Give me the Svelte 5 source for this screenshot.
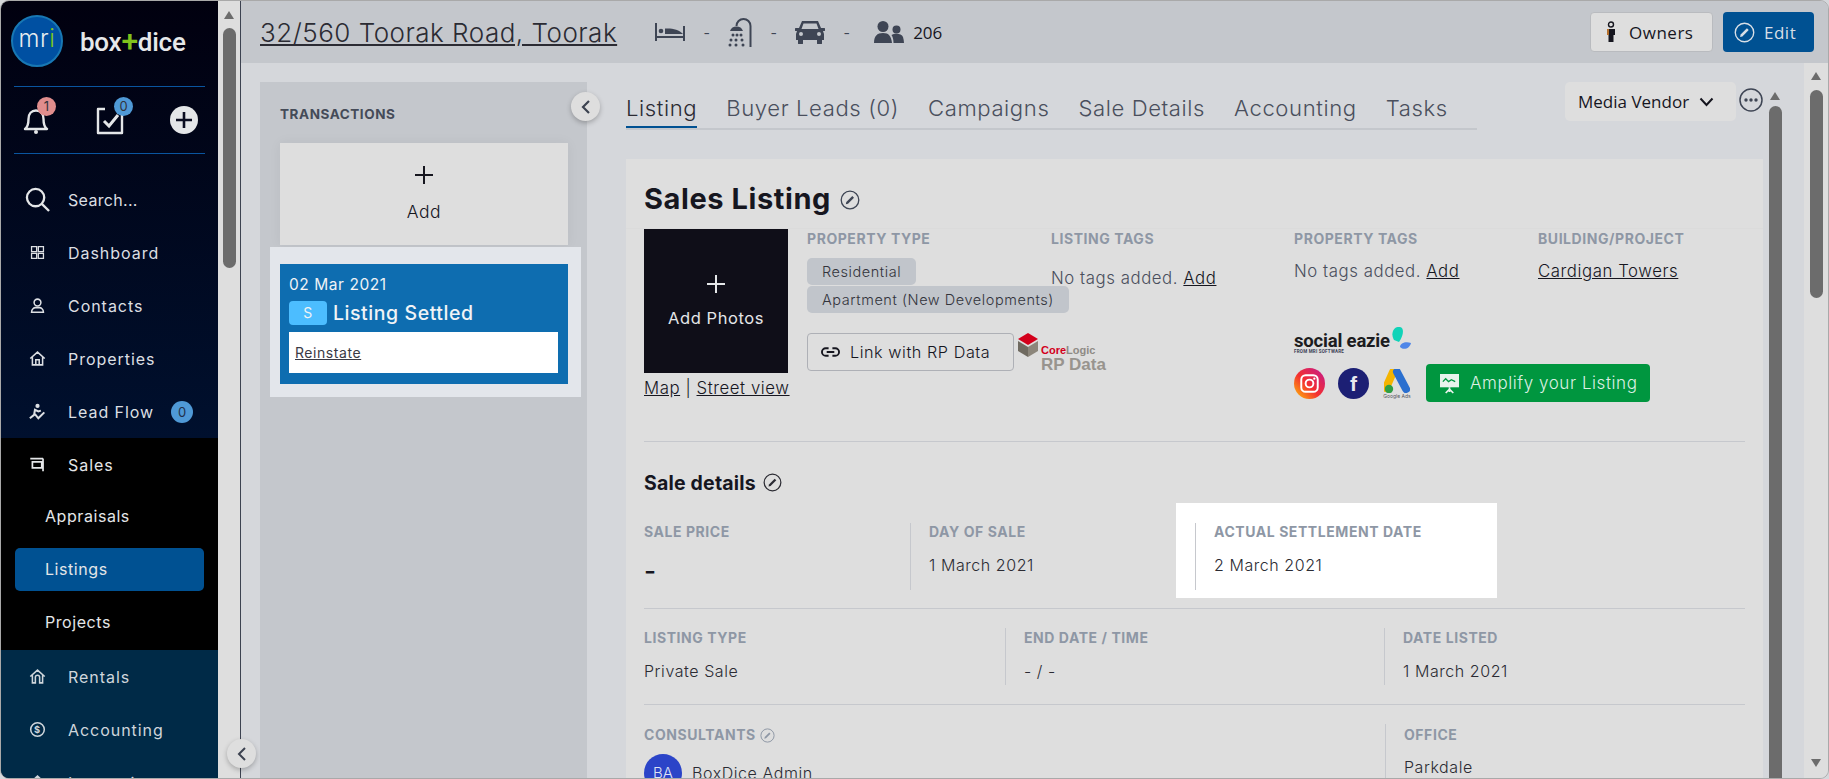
<script>
  // sidebar menu data, icons are drawn below by name
  const topItems = [
    { label: 'Dashboard', icon: 'grid' },
    { label: 'Contacts', icon: 'person' },
    { label: 'Properties', icon: 'house' },
    { label: 'Lead Flow', icon: 'runner', badge: 0 }
  ];
  const subItems = ['Appraisals', 'Listings', 'Projects'];
  const lowerItems = [
    { label: 'Rentals', icon: 'rentals' },
    { label: 'Accounting', icon: 'dollar' },
    { label: 'Inspections', icon: 'house' }
  ];
  const tabs = ['Listing', 'Buyer Leads (0)', 'Campaigns', 'Sale Details', 'Accounting', 'Tasks'];
</script>

{#snippet menuIcon(name)}
  <svg class="menu-icon" viewBox="0 0 20 20" fill="none" stroke="currentColor" stroke-width="1.8">
    {#if name === 'grid'}
      <path d="M3 3h6v6H3zM11 3h6v6h-6zM3 11h6v6H3zM11 11h6v6h-6z" stroke-width="1.5" />
    {:else if name === 'person'}
      <circle cx="10" cy="6.500" r="4" />
      <path d="M3 18c0-4 3-5.500 4.500-5.500h5c1.500 0 4.500 1.500 4.500 5.500z" />
    {:else if name === 'house'}
      <path d="M1.500 10 10 2.500 18.500 10M4 8.500V17.500h12V8.500M8 17.500V11.500h4v6" />
    {:else if name === 'runner'}
      <circle cx="10" cy="3.500" r="2.500" fill="currentColor" stroke="none" />
      <path d="M1 18l5-4 1-6 4 2 3-1M7 13l4 5 7-7" stroke-width="2.400" />
    {:else if name === 'sales'}
      <path d="M1.500 3h15M4 7h11v7H4zM16.500 3v15" stroke-width="2" />
    {:else if name === 'rentals'}
      <path d="M1.500 10 10 2.500 18.500 10M4 8.500V17.500h3.500V11a2.500 2.500 0 0 1 5 0v6.500H16V8.500" />
    {:else if name === 'dollar'}
      <circle cx="10" cy="10" r="8" />
      <text x="10" y="14" text-anchor="middle" font-size="11" font-weight="700" fill="currentColor" stroke="none" font-family="Inter, sans-serif">$</text>
    {/if}
  </svg>
{/snippet}

{#snippet editIcon(cls)}
  <svg class={cls} viewBox="0 0 20 20" fill="none" stroke="currentColor" stroke-width="1.300">
    <circle cx="10" cy="10" r="8.800" />
    <path d="M5.800 14.200 6.300 12l6-6 1.700 1.700-6 6z" fill="currentColor" stroke="none" />
  </svg>
{/snippet}

<div class="window">
  <aside class="sidebar">
    <div class="brand">
      <div class="mri">m<span class="mri-r">r</span><span class="mri-i">i</span></div>
      <div class="boxdice">box<span class="plus">+</span>dice</div>
    </div>

    <div class="quick">
      <div class="quick-item">
        <svg class="quick-icon" viewBox="0 0 28 30" fill="none" stroke="#e4e6e8" stroke-width="2.400">
          <path d="M2 24c2.500-2 3.500-4 3.500-10 0-5 3-8.500 7.500-8.500s7.500 3.500 7.500 8.500c0 6 1 8 3.500 10z" stroke-linejoin="round" />
          <circle cx="13" cy="27" r="2" fill="#e4e6e8" stroke="none" />
        </svg>
        <span class="quick-badge red">1</span>
      </div>
      <div class="quick-item">
        <svg class="quick-icon" viewBox="0 0 28 30" fill="none" stroke="#e4e6e8" stroke-width="2.400">
          <path d="M9 4H2v24h24V4h-3" stroke-linejoin="round" />
          <path d="M8 16l5 5 9-11" stroke-width="3" />
        </svg>
        <span class="quick-badge blue">0</span>
      </div>
      <svg class="quick-plus" viewBox="0 0 28 28">
        <circle cx="14" cy="14" r="14" fill="#e4e6e8" />
        <path d="M14 6v16M6 14h16" stroke="#0a0c20" stroke-width="2.600" />
      </svg>
    </div>

    <div class="menu">
      <div class="search-row">
        <svg class="search-icon" viewBox="0 0 26 26" fill="none" stroke="#e4e6e8" stroke-width="2.400">
          <circle cx="11" cy="11" r="9" />
          <path d="M17.500 17.500 25 25" />
        </svg>
        <span>Search...</span>
      </div>
      {#each topItems as item}
        <div class="menu-row">
          {@render menuIcon(item.icon)}
          <span>{item.label}</span>
          {#if item.badge !== undefined}<span class="menu-badge">{item.badge}</span>{/if}
        </div>
      {/each}
    </div>

    <div class="sales-group">
      <div class="menu-row">
        {@render menuIcon('sales')}
        <span>Sales</span>
      </div>
      {#each subItems as sub}
        <div class="sub-row" class:active={sub === 'Listings'}>{sub}</div>
      {/each}
    </div>

    <div class="lower">
      {#each lowerItems as item}
        <div class="menu-row">
          {@render menuIcon(item.icon)}
          <span>{item.label}</span>
        </div>
      {/each}
    </div>
  </aside>

  <div class="side-track">
    <span class="arrow-up"></span>
    <span class="side-thumb"></span>
  </div>

  <button class="collapse side-collapse" aria-label="Collapse sidebar">
    <svg viewBox="0 0 12 16" fill="none" stroke="#3c4250" stroke-width="2"><path d="M9 2 3 8l6 6" /></svg>
  </button>

  <div class="main">
    <header class="topbar">
      <a class="address">32/560 Toorak Road, Toorak</a>
      <div class="specs">
        <svg class="bed" viewBox="0 0 30 18" fill="#3e4554">
          <path d="M0 0h2v18H0zM28 3h2v15h-2zM2 13h26v2H2z" />
          <circle cx="6" cy="8" r="2.300" />
          <path d="M10 11V5.500c6-.5 14 .5 18 5.500z" />
        </svg>
        <span class="dash">-</span>
        <svg class="shower" viewBox="0 0 24 30" fill="none">
          <path d="M22.500 30V9a7 7 0 0 0-14 0" stroke="#3e4554" stroke-width="2" />
          <path d="M2 14a7 7 0 0 1 13 0z" fill="#3e4554" />
          <g fill="#3e4554"><circle cx="5" cy="18" r="1.500" /><circle cx="9" cy="18" r="1.500" /><circle cx="13" cy="18" r="1.500" /><circle cx="3" cy="23" r="1.500" /><circle cx="8" cy="23" r="1.500" /><circle cx="14" cy="23" r="1.500" /><circle cx="2" cy="28" r="1.500" /><circle cx="8" cy="28" r="1.500" /><circle cx="15" cy="28" r="1.500" /></g>
        </svg>
        <span class="dash">-</span>
        <svg class="car" viewBox="0 0 30 24" fill="#3e4554">
          <path fill-rule="evenodd" d="M7 1h16l3 7h3a1 1 0 0 1 0 3h-1l1 3v6h-2v3a1 1 0 0 1-5 0v-3H8v3a1 1 0 0 1-5 0v-3H1v-6l1-3H1a1 1 0 0 1 0-3h3zM8.500 3.500 6.500 9h17l-2-5.500zM6 12a2 2 0 1 0 0 4 2 2 0 0 0 0-4zm18 0a2 2 0 1 0 0 4 2 2 0 0 0 0-4z" />
        </svg>
        <span class="dash">-</span>
        <svg class="people" viewBox="0 0 30 22" fill="#3e4554">
          <circle cx="9" cy="5.500" r="5.500" />
          <path d="M0 22c0-7 3-10 9-10s8 3 9 10z" />
          <circle cx="22.500" cy="8.500" r="4" />
          <path d="M19.500 22c0-3-.5-6-2-8 3-2 10-2 11.500 2 .5 2 1 4 1 6z" />
        </svg>
        <span class="count">206</span>
      </div>
      <div class="top-actions">
        <button class="owners">
          <svg viewBox="0 0 10 22" width="10" height="22">
            <circle cx="5" cy="3.500" r="2.500" fill="none" stroke="#16161f" stroke-width="1.400" />
            <path d="M1 8h8v6H7.500v7h-5v-7H1z" fill="#16161f" />
            <path d="M1 8h2v6H1z" fill="#b5702d" />
          </svg>
          Owners
        </button>
        <button class="edit">
          {@render editIcon('edit-btn-icon')}
          Edit
        </button>
      </div>
    </header>

    <div class="content">
      <section class="transactions">
        <h4>TRANSACTIONS</h4>
        <div class="add-card">
          <svg viewBox="0 0 18 18" width="18" height="18" stroke="#16161f" stroke-width="2"><path d="M9 0v18M0 9h18" /></svg>
          <span>Add</span>
        </div>
        <div class="tx-highlight">
          <div class="tx-card">
            <div class="tx-date">02 Mar 2021</div>
            <div class="tx-status"><span class="tx-s">S</span>Listing Settled</div>
            <div class="tx-actions"><a>Reinstate</a></div>
          </div>
        </div>
      </section>

      <button class="collapse tx-collapse" aria-label="Collapse transactions">
        <svg viewBox="0 0 12 16" fill="none" stroke="#3c4250" stroke-width="2.200"><path d="M9 2 3 8l6 6" /></svg>
      </button>

      <div class="detail">
        <div class="tab-row">
          <nav class="tabs">
            {#each tabs as tab, i}
              <span class="tab" class:current={i === 0}>{tab}</span>
            {/each}
          </nav>
          <div class="vendor">Media Vendor
            <svg viewBox="0 0 14 10" width="15" height="10" fill="none" stroke="#16161f" stroke-width="2"><path d="M1 1.500 7 8l6-6.500" /></svg>
          </div>
          <svg class="dots" viewBox="0 0 24 24" fill="none" stroke="#3e4554" stroke-width="1.500">
            <circle cx="12" cy="12" r="11" />
            <g fill="#3e4554" stroke="none"><circle cx="7" cy="12" r="1.700" /><circle cx="12" cy="12" r="1.700" /><circle cx="17" cy="12" r="1.700" /></g>
          </svg>
        </div>

        <article class="card">
          <div class="card-title">
            <h2>Sales Listing</h2>
            {@render editIcon('edit-title')}
          </div>
          <div class="summary">
            <div class="photo-col">
              <div class="photo">
                <svg viewBox="0 0 18 18" width="18" height="18" stroke="#e4e6e8" stroke-width="2"><path d="M9 0v18M0 9h18" /></svg>
                <span>Add Photos</span>
              </div>
              <div class="photo-links"><a>Map</a> | <a>Street view</a></div>
            </div>
            <div class="summary-grid">
              <div class="field type-field">
                <h5>PROPERTY TYPE</h5>
                <span class="pill first">Residential</span>
                <span class="pill">Apartment (New Developments)</span>
                <div class="rp-row">
                  <button class="rp-btn">
                    <svg viewBox="0 0 20 10" width="19" height="10" fill="none" stroke="#16161f" stroke-width="2"><path d="M8 1H5a4 4 0 0 0 0 8h3M12 1h3a4 4 0 0 1 0 8h-3M6 5h8" /></svg>
                    Link with RP Data
                  </button>
                  <div class="corelogic">
                    <svg viewBox="0 0 22 24" width="22" height="24">
                      <path d="M11 0l10 6-10 6L1 6z" fill="#d3001b" />
                      <path d="M1 8l10 6v10L1 18z" fill="#6f6a60" />
                      <path d="M21 8l-10 6v10l10-6z" fill="#8c867b" />
                    </svg>
                    <div class="corelogic-text">
                      <span class="cl-name"><b>Core</b>Logic</span>
                      <span class="cl-rp">RP Data</span>
                    </div>
                  </div>
                </div>
              </div>
              <div class="field">
                <h5>LISTING TAGS</h5>
                <p class="tags-low">No tags added. <a>Add</a></p>
              </div>
              <div class="field">
                <h5>PROPERTY TAGS</h5>
                <p>No tags added. <a>Add</a></p>
                <div class="social-logo">
                  <div class="se-word">social eazie<small>FROM MRI SOFTWARE</small></div>
                  <svg viewBox="0 0 22 24" width="22" height="24">
                    <path d="M4 13C0 6 4-1 10 0c5 1 3 10-1 15z" fill="#10d3b8" />
                    <path d="M10 20c0-4 6-6 11-4-1 5-7 8-11 4z" fill="#4f86e8" />
                  </svg>
                </div>
                <div class="social-row">
                  <svg class="s-icon" viewBox="0 0 32 32">
                    <defs>
                      <linearGradient id="ig" x1="0" y1="1" x2="1" y2="0">
                        <stop offset="0" stop-color="#ffc107" /><stop offset=".45" stop-color="#f4302f" /><stop offset="1" stop-color="#c2188f" />
                      </linearGradient>
                    </defs>
                    <circle cx="16" cy="16" r="16" fill="url(#ig)" />
                    <rect x="7.500" y="7.500" width="17" height="17" rx="4.500" fill="none" stroke="#fff" stroke-width="2" />
                    <circle cx="16" cy="16" r="4" fill="none" stroke="#fff" stroke-width="2" />
                    <circle cx="21" cy="11" r="1.200" fill="#fff" />
                  </svg>
                  <div class="fb">f</div>
                  <div class="gads">
                    <svg viewBox="0 0 26 24" width="26" height="24">
                      <path d="M9 3 2 19" stroke="#f4b400" stroke-width="8" stroke-linecap="round" />
                      <path d="M13 3l9 17" stroke="#2a6fcf" stroke-width="8" stroke-linecap="round" />
                      <circle cx="5" cy="20" r="4.200" fill="#2e9e45" />
                    </svg>
                    <small>Google Ads</small>
                  </div>
                  <button class="amplify">
                    <svg viewBox="0 0 20 22" width="19" height="21">
                      <path d="M0 1h20v14H0z" fill="#e8f3ec" />
                      <path d="M3 9l3-3 3 3 3-2 4 2" fill="none" stroke="#00963f" stroke-width="1.400" />
                      <path d="M10 15v5M6 21l4-4 4 4" stroke="#e8f3ec" stroke-width="1.800" fill="none" />
                    </svg>
                    Amplify your Listing
                  </button>
                </div>
              </div>
              <div class="field">
                <h5>BUILDING/PROJECT</h5>
                <p><a>Cardigan Towers</a></p>
              </div>
            </div>
          </div>

          <div class="divider"></div>
          <div class="sale-heading">
            <h3>Sale details</h3>
            {@render editIcon('edit-sale')}
          </div>
          <div class="sale-row">
            <div class="cell price-cell">
              <h5>SALE PRICE</h5>
              <div class="big-dash">-</div>
            </div>
            <div class="cell day-cell ruled">
              <h5>DAY OF SALE</h5>
              <div class="value">1 March 2021</div>
            </div>
            <div class="settled-box">
              <div class="cell ruled">
                <h5>ACTUAL SETTLEMENT DATE</h5>
                <div class="value">2 March 2021</div>
              </div>
            </div>
          </div>
          <div class="divider"></div>
          <div class="info-row">
            <div class="cell type-cell">
              <h5>LISTING TYPE</h5>
              <div class="value">Private Sale</div>
            </div>
            <div class="cell end-cell ruled">
              <h5>END DATE / TIME</h5>
              <div class="value">- / -</div>
            </div>
            <div class="cell ruled">
              <h5>DATE LISTED</h5>
              <div class="value">1 March 2021</div>
            </div>
          </div>
          <div class="divider"></div>
          <div class="info-row last">
            <div class="cell consult-cell">
              <h5>CONSULTANTS {@render editIcon('edit-small')}</h5>
              <div class="consultant"><span class="avatar">BA</span>BoxDice Admin</div>
            </div>
            <div class="cell ruled">
              <h5>OFFICE</h5>
              <div class="value">Parkdale</div>
            </div>
          </div>
        </article>
      </div>

      <div class="inner-track">
        <span class="arrow-up"></span>
        <span class="inner-thumb"></span>
      </div>
      <div class="track-gap"></div>
      <div class="outer-track">
        <span class="arrow-up"></span>
        <span class="outer-thumb"></span>
        <span class="arrow-down"></span>
      </div>
    </div>
  </div>
</div>

<style>
  :global(body) {
    margin: 0;
    background: #d5d7db;
  }
  .window {
    position: relative;
    display: flex;
    width: 1829px;
    height: 779px;
    box-sizing: border-box;
    border: 1px solid #a9a9a9;
    border-radius: 9px;
    overflow: hidden;
    background: #d5d7db;
    font-family: Inter, "Liberation Sans", sans-serif;
    letter-spacing: 0.035em;
    color: #16161f;
  }
  a {
    text-decoration: underline;
  }
  h2, h3, h4, h5, p {
    margin: 0;
  }
  button {
    font: inherit;
    letter-spacing: inherit;
  }

  /* sidebar */
  .sidebar {
    flex: none;
    width: 217px;
    display: flex;
    flex-direction: column;
    color: #dcdfe3;
    background: linear-gradient(#01000f, #00102e 437px);
    font-size: 16px;
    overflow: hidden;
  }
  .brand {
    flex: none;
    display: flex;
    align-items: center;
    height: 85px;
    padding: 0 0 0 10px;
    box-sizing: border-box;
  }
  .mri {
    width: 52px;
    height: 52px;
    box-sizing: border-box;
    margin-top: -5px;
    border-radius: 50%;
    background: #0050a2;
    border: 2px solid #1878b4;
    color: #e8ecef;
    font-size: 24px;
    font-weight: 300;
    line-height: 44px;
    text-align: center;
    letter-spacing: 0.02em;
  }
  .mri-i {
    color: #7fc31c;
  }
  .boxdice {
    margin: -5px 0 0 17px;
    color: #e6e8ea;
    font-family: Roboto, sans-serif;
    font-size: 26px;
    font-weight: 500;
    letter-spacing: -0.01em;
  }
  .plus {
    color: #7fc31c;
    font-weight: 500;
    font-size: 30px;
    line-height: 1;
  }
  .quick {
    flex: none;
    display: flex;
    align-items: center;
    height: 66px;
    margin: 0 13px;
    padding: 0 0 0 9px;
    border-top: 1px solid #0a559f;
    border-bottom: 1px solid #0a559f;
  }
  .quick-item {
    position: relative;
    flex: none;
    width: 73px;
    display: flex;
  }
  .quick-icon {
    width: 28px;
    height: 30px;
  }
  .quick-badge {
    position: absolute;
    top: -8px;
    left: 14px;
    width: 19px;
    height: 19px;
    border-radius: 50%;
    color: #33343c;
    font-size: 13px;
    line-height: 19px;
    text-align: center;
    letter-spacing: 0;
  }
  .quick-badge.red {
    background: #e08d8d;
  }
  .quick-badge.blue {
    left: 18px;
    background: #4f99d6;
  }
  .quick-plus {
    flex: none;
    width: 28px;
    height: 28px;
    margin-left: 1px;
  }
  .menu {
    flex: none;
    padding-top: 19px;
    letter-spacing: 0.06em;
  }
  .search-row {
    letter-spacing: 0.02em;
  }
  .search-row, .menu-row {
    display: flex;
    align-items: center;
    height: 53px;
  }
  .search-icon {
    width: 25px;
    height: 25px;
    margin: 0 18px 0 24px;
    flex: none;
  }
  .menu-icon {
    width: 17px;
    height: 17px;
    margin: 0 22px 0 28px;
    flex: none;
  }
  .menu-badge {
    width: 22px;
    height: 22px;
    margin-left: 17px;
    border-radius: 50%;
    background: #4f99d6;
    color: #22304a;
    font-size: 13px;
    line-height: 22px;
    text-align: center;
    letter-spacing: 0;
  }
  .sales-group {
    flex: none;
    height: 212px;
    background: #000;
    color: #e4e6e8;
  }
  .sales-group .menu-row {
    margin-bottom: 4px;
    letter-spacing: 0.06em;
  }
  .sub-row {
    height: 43px;
    margin: 0 14px 10px;
    padding-left: 30px;
    line-height: 43px;
    border-radius: 5px;
  }
  .sub-row.active {
    background: #005192;
  }
  .lower {
    flex: 1;
    background: #002a47;
    color: #cfd6dc;
    letter-spacing: 0.06em;
  }

  .side-track {
    flex: none;
    display: flex;
    flex-direction: column;
    align-items: center;
    width: 22px;
    background: #dedede;
    border-right: 1px solid #3c4250;
  }
  .arrow-up, .arrow-down {
    flex: none;
    width: 0;
    height: 0;
    border-left: 5.500px solid transparent;
    border-right: 5.500px solid transparent;
  }
  .arrow-up {
    margin-top: 10px;
    border-bottom: 8px solid #6c6c6c;
  }
  .arrow-down {
    margin-top: auto;
    margin-bottom: 11px;
    border-top: 8px solid #6c6c6c;
  }
  .side-thumb {
    width: 13px;
    height: 240px;
    margin-top: 9px;
    border-radius: 7px;
    background: #6c6c6c;
  }

  .collapse {
    position: absolute;
    display: flex;
    align-items: center;
    justify-content: center;
    width: 29px;
    height: 29px;
    padding: 0;
    border: 0;
    border-radius: 50%;
    background: #dedede;
    box-shadow: 0 2px 5px rgba(0, 0, 0, 0.25);
  }
  .collapse svg {
    width: 12px;
    height: 16px;
  }
  .side-collapse {
    left: 226px;
    top: 738px;
  }
  .tx-collapse {
    left: 330px;
    top: 29px;
  }

  /* main column */
  .main {
    flex: 1;
    min-width: 0;
    display: flex;
    flex-direction: column;
  }
  .topbar {
    flex: none;
    display: flex;
    align-items: center;
    height: 62px;
    padding: 0 14px 0 19px;
    background: #c4c7cc;
  }
  .address {
    color: #2b2b33;
    font-size: 26px;
    font-weight: 300;
    letter-spacing: 0.019em;
    white-space: nowrap;
  }
  .specs {
    display: flex;
    align-items: center;
    margin-left: 38px;
  }
  .bed {
    width: 30px;
    height: 18px;
  }
  .shower {
    width: 24px;
    height: 30px;
  }
  .car {
    width: 30px;
    height: 24px;
  }
  .people {
    width: 30px;
    height: 22px;
    margin-left: 6px;
  }
  .dash {
    width: 43px;
    text-align: center;
    color: #3e4554;
    font-size: 14px;
    letter-spacing: 0;
  }
  .count {
    margin-left: 9px;
    font-family: "Open Sans", sans-serif;
    font-size: 17px;
    letter-spacing: 0;
  }
  .top-actions {
    display: flex;
    gap: 10px;
    margin-left: auto;
  }
  .owners, .edit {
    display: flex;
    align-items: center;
    height: 40px;
    box-sizing: border-box;
    border-radius: 4px;
    font-family: "Open Sans", sans-serif;
    font-size: 17px;
    letter-spacing: 0.03em;
  }
  .owners {
    width: 123px;
    gap: 13px;
    padding: 0 0 0 15px;
    background: #dedede;
    border: 1px solid #b9bbbf;
    color: #16161f;
  }
  .edit {
    width: 91px;
    gap: 9px;
    padding: 0 0 0 11px;
    background: #005192;
    border: 0;
    color: #d8dfe6;
  }
  .edit-btn-icon {
    width: 21px;
    height: 21px;
  }

  .content {
    position: relative;
    flex: 1;
    min-height: 0;
    display: flex;
  }

  /* transactions */
  .transactions {
    flex: none;
    width: 327px;
    margin: 19px 0 0 19px;
    padding: 0 19px 0 20px;
    box-sizing: border-box;
    background: #c4c7cc;
  }
  .transactions h4 {
    padding: 24px 0 21px;
    color: #454b58;
    font-size: 13.500px;
    font-weight: 700;
    line-height: 16px;
  }
  .add-card {
    display: flex;
    flex-direction: column;
    align-items: center;
    height: 102px;
    padding-top: 23px;
    box-sizing: border-box;
    background: #dedede;
    font-size: 17.500px;
    font-weight: 300;
    box-shadow: 0 0 12px rgba(0, 0, 0, 0.05);
  }
  .add-card span {
    margin-top: 17px;
  }
  .tx-highlight {
    margin: 2px -13px 0 -10px;
    padding: 17px 13px 13px 10px;
    background: #e3e6eb;
  }
  .tx-card {
    height: 120px;
    padding: 11px 9px 0;
    box-sizing: border-box;
    background: #0e6db0;
    color: #f0f3f6;
  }
  .tx-date {
    font-size: 15.500px;
    line-height: 20px;
  }
  .tx-status {
    display: flex;
    align-items: center;
    height: 24px;
    margin-top: 6px;
    font-size: 19.500px;
    font-weight: 500;
  }
  .tx-s {
    width: 38px;
    height: 24px;
    margin-right: 6px;
    border-radius: 4px;
    background: #4cbdff;
    font-size: 14px;
    font-weight: 400;
    line-height: 24px;
    text-align: center;
  }
  .tx-actions {
    width: 269px;
    height: 41px;
    margin-top: 7px;
    padding-left: 6px;
    box-sizing: border-box;
    background: #fff;
    color: #3a3a44;
    font-size: 14px;
    line-height: 41px;
  }

  /* listing detail */
  .detail {
    flex: none;
    width: 1137px;
    margin-left: 39px;
    display: flex;
    flex-direction: column;
    min-height: 0;
  }
  .tab-row {
    position: relative;
    flex: none;
    height: 96px;
  }
  .tabs {
    display: flex;
    gap: 29px;
    width: 851px;
    height: 67px;
    box-sizing: border-box;
    padding-top: 30px;
    border-bottom: 2px solid #c4c7cc;
  }
  .tab {
    height: 35px;
    box-sizing: border-box;
    border-bottom: 2px solid transparent;
    color: #4a4f5d;
    font-size: 22.100px;
    font-weight: 300;
    line-height: 30px;
    letter-spacing: 0.027em;
  }
  .tab.current {
    color: #2b2b33;
    border-bottom-color: #005192;
  }
  .vendor {
    position: absolute;
    left: 939px;
    top: 19px;
    display: flex;
    align-items: center;
    gap: 10px;
    width: 171px;
    height: 39px;
    padding-left: 13px;
    box-sizing: border-box;
    border-radius: 5px;
    background: #dedede;
    font-family: "Open Sans", sans-serif;
    font-size: 17px;
    letter-spacing: 0;
  }
  .dots {
    position: absolute;
    left: 1113px;
    top: 25px;
    width: 24px;
    height: 24px;
  }
  .card {
    flex: 1;
    min-height: 0;
    padding: 0 18px;
    background: #dedede;
    overflow: hidden;
  }
  .card-title {
    display: flex;
    align-items: center;
    gap: 9px;
    height: 70px;
    margin: 0 -18px;
    padding: 9px 18px 0;
    box-sizing: border-box;
    border-bottom: 1px solid #dbdbdb;
  }
  .card-title h2 {
    font-size: 29px;
    font-weight: 700;
    letter-spacing: 0.02em;
  }
  .edit-title {
    width: 20px;
    height: 20px;
    margin-top: 3px;
    color: #3e4554;
  }
  .summary {
    display: flex;
    height: 212px;
  }
  .photo-col {
    flex: none;
    width: 163px;
  }
  .photo {
    display: flex;
    flex-direction: column;
    align-items: center;
    width: 144px;
    height: 144px;
    padding-top: 46px;
    box-sizing: border-box;
    background: #0f0e18;
    color: #e4e6e8;
    font-size: 16.500px;
  }
  .photo span {
    margin-top: 15px;
  }
  .photo-links {
    margin-top: 5px;
    font-size: 16.800px;
    font-weight: 300;
    line-height: 20px;
    white-space: nowrap;
  }
  .summary-grid {
    display: grid;
    grid-template-columns: 244px 243px 244px 1fr;
  }
  h5 {
    color: #8e97a5;
    font-size: 14px;
    font-weight: 700;
    line-height: 18px;
  }
  .field {
    padding-top: 1px;
  }
  .field p {
    margin-top: 13px;
    color: #4a4f5d;
    font-size: 16.800px;
    font-weight: 300;
    line-height: 20px;
    white-space: nowrap;
  }
  .field p a {
    color: #16161f;
  }
  .field p.tags-low {
    margin-top: 20px;
  }
  .type-field h5 {
    margin-bottom: 10px;
  }
  .pill {
    display: table;
    height: 27px;
    margin-bottom: 1px;
    padding: 0 15px;
    border-radius: 5px;
    background: #c1c5cb;
    color: #33343c;
    font-size: 14.500px;
    font-weight: 300;
    line-height: 27px;
    white-space: nowrap;
  }
  .rp-row {
    display: flex;
    margin-top: 20px;
    white-space: nowrap;
  }
  .rp-btn {
    flex: none;
    display: flex;
    align-items: center;
    gap: 10px;
    width: 207px;
    height: 38px;
    padding: 0 0 0 13px;
    box-sizing: border-box;
    border: 1px solid #aeb0b6;
    border-radius: 4px;
    background: transparent;
    color: #16161f;
    font-size: 16.200px;
    font-weight: 300;
  }
  .corelogic {
    display: flex;
    margin-left: 3px;
  }
  .corelogic-text {
    display: flex;
    flex-direction: column;
    margin: 11px 0 0 2px;
    letter-spacing: 0;
  }
  .cl-name {
    color: #8f8b85;
    font-family: "Liberation Sans", sans-serif;
    font-size: 11px;
    font-weight: 700;
    line-height: 12px;
  }
  .cl-name b {
    color: #d3001b;
  }
  .cl-rp {
    color: #98948e;
    font-family: "Liberation Sans", sans-serif;
    font-size: 17px;
    font-weight: 700;
    line-height: 18px;
  }
  .social-logo {
    display: flex;
    align-items: flex-start;
    height: 28px;
    margin-top: 46px;
  }
  .se-word {
    margin-top: 6px;
    color: #1c1c20;
    font-family: Roboto, sans-serif;
    font-size: 18.500px;
    font-weight: 700;
    line-height: 16px;
    letter-spacing: -0.01em;
    white-space: nowrap;
  }
  .se-word small {
    display: block;
    color: #3a3f55;
    font-size: 4.500px;
    line-height: 5px;
    letter-spacing: 0.05em;
  }
  .social-row {
    display: flex;
    align-items: center;
    height: 38px;
    margin-top: 9px;
    white-space: nowrap;
  }
  .s-icon {
    width: 31px;
    height: 31px;
    flex: none;
  }
  .fb {
    flex: none;
    width: 31px;
    height: 31px;
    margin-left: 13px;
    border-radius: 50%;
    background: #1c1f74;
    color: #e8e8ef;
    font-family: "Liberation Sans", sans-serif;
    font-size: 21px;
    font-weight: 700;
    line-height: 32px;
    text-align: center;
    letter-spacing: 0;
  }
  .gads {
    flex: none;
    display: flex;
    flex-direction: column;
    align-items: center;
    width: 26px;
    margin-left: 15px;
    margin-top: 3px;
  }
  .gads small {
    color: #55585f;
    font-size: 5px;
    line-height: 7px;
    letter-spacing: 0;
  }
  .amplify {
    flex: none;
    display: flex;
    align-items: center;
    gap: 11px;
    width: 224px;
    height: 38px;
    margin-left: 16px;
    padding: 0 0 0 14px;
    box-sizing: border-box;
    border: 0;
    border-radius: 4px;
    background: #00963f;
    color: #dcefe3;
    font-size: 17px;
    font-weight: 300;
  }
  .divider {
    height: 1px;
    background: #c6c8cd;
  }
  .sale-heading {
    display: flex;
    align-items: center;
    gap: 7px;
    height: 81px;
    box-sizing: border-box;
  }
  .sale-heading h3 {
    font-size: 19.500px;
    font-weight: 700;
    letter-spacing: 0.01em;
  }
  .edit-sale {
    width: 19px;
    height: 19px;
    color: #2b2b33;
  }
  .sale-row {
    display: flex;
    height: 85px;
  }
  .cell {
    box-sizing: border-box;
    height: 67px;
  }
  .cell.ruled {
    border-left: 1px solid #c6c8cd;
    padding-left: 18px;
  }
  .cell h5 {
    display: flex;
    align-items: center;
    gap: 4px;
    height: 18px;
  }
  .price-cell {
    width: 266px;
  }
  .day-cell {
    width: 266px;
  }
  .big-dash {
    margin-top: 15px;
    font-size: 26px;
    font-weight: 500;
    line-height: 30px;
  }
  .value {
    margin-top: 14px;
    color: #2b2b33;
    font-size: 16px;
    font-weight: 300;
    line-height: 20px;
    white-space: nowrap;
  }
  .settled-box {
    width: 321px;
    height: 95px;
    margin-top: -20px;
    padding: 20px 0 0 19px;
    box-sizing: border-box;
    background: #fff;
  }
  .info-row {
    display: flex;
    height: 95px;
    padding-top: 19px;
    box-sizing: border-box;
  }
  .info-row .cell {
    height: 57px;
  }
  .info-row .cell h5 {
    margin-top: 1px;
  }
  .info-row .cell .value {
    margin-top: 14px;
  }
  .type-cell {
    width: 361px;
  }
  .end-cell {
    width: 379px;
  }
  .consult-cell {
    width: 741px;
  }
  .info-row.last .cell {
    height: 100px;
  }
  .info-row.last .cell h5 {
    margin-top: 2px;
  }
  .info-row.last .cell .value {
    margin-top: 13px;
  }
  .edit-small {
    width: 15px;
    height: 15px;
  }
  .consultant {
    display: flex;
    align-items: center;
    gap: 10px;
    margin-top: 10px;
    color: #2b2b33;
    font-size: 16px;
    font-weight: 300;
  }
  .avatar {
    width: 38px;
    height: 38px;
    border-radius: 50%;
    background: #2b44c8;
    color: #dfe3f5;
    font-size: 15px;
    line-height: 38px;
    text-align: center;
    letter-spacing: 0;
  }

  /* scrollbars on the right */
  .inner-track, .outer-track {
    flex: none;
    display: flex;
    flex-direction: column;
    align-items: center;
  }
  .inner-track {
    width: 24px;
    margin-top: 19px;
    background: #d5d7db;
  }
  .inner-thumb {
    width: 13px;
    flex: 1;
    margin-top: 6px;
    background: #6c6c6c;
    border-radius: 7px 7px 0 0;
  }
  .track-gap {
    width: 18px;
  }
  .outer-track {
    width: 24px;
    background: #dedede;
  }
  .outer-track .arrow-up {
    margin-top: 9px;
  }
  .outer-thumb {
    width: 13px;
    height: 208px;
    margin-top: 10px;
    background: #6c6c6c;
    border-radius: 7px;
  }
</style>
